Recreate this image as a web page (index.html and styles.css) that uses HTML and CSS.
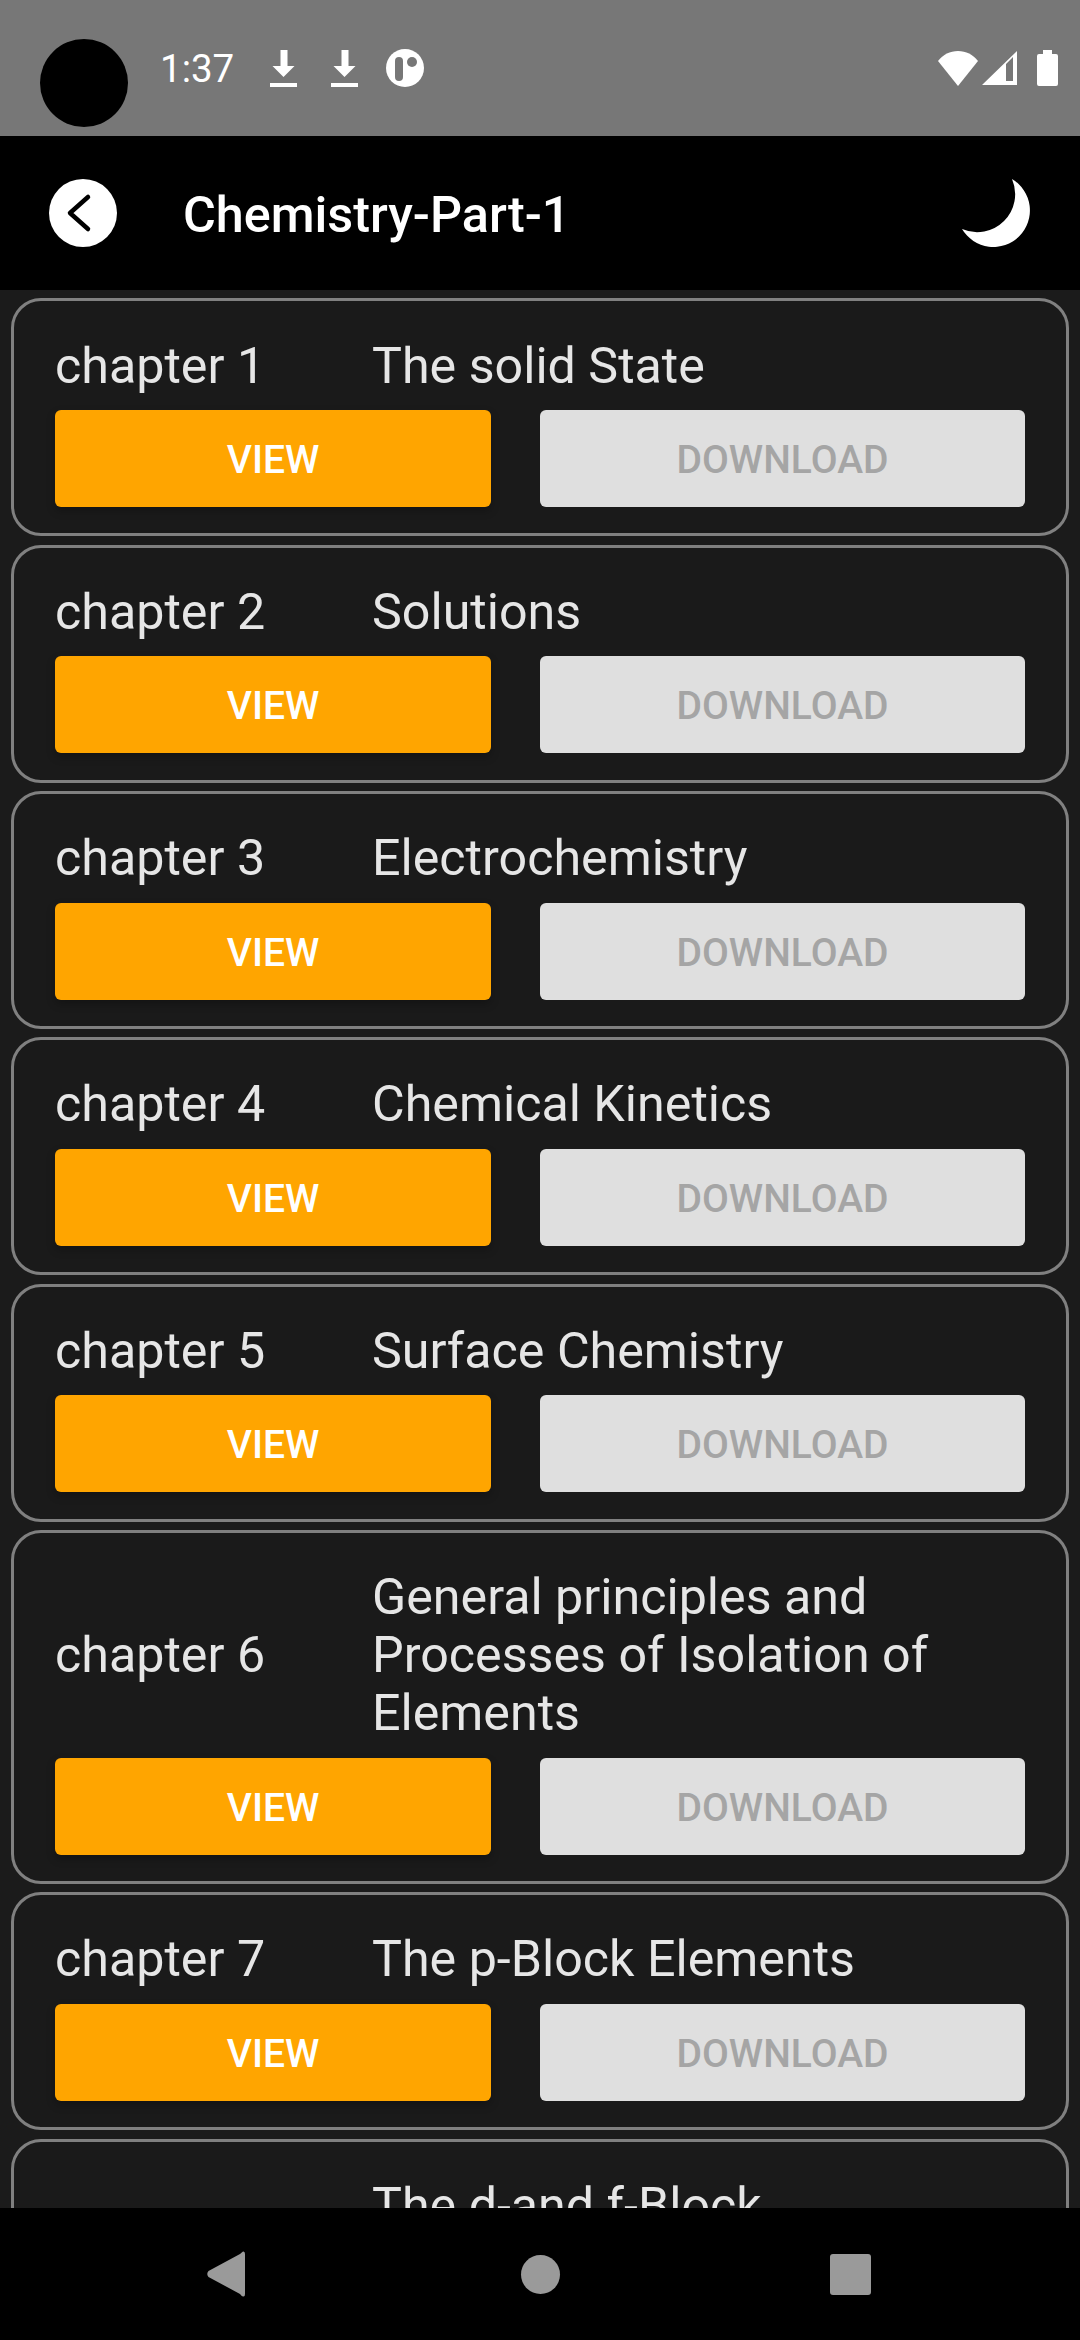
FILE: index.html
```html
<!DOCTYPE html>
<html lang="en">
<head>
    <meta charset="UTF-8">
    <meta name="viewport" content="width=device-width, initial-scale=1.0">
    <title>Chemistry-Part-1</title>
    <link rel="stylesheet" href="styles.css">
</head>
<body>

<div class="phone">
    <div class="status-bar">
        <div class="camera"></div>
        <span class="time">1:37</span>
        <svg class="ic-download" viewBox="0 0 27 37"><path d="M10.500 0h7v16h7L13.500 27 2.500 16h8z M0 33h27v4H0z" fill="#fff"/></svg>
        <svg class="ic-download" viewBox="0 0 27 37"><path d="M10.500 0h7v16h7L13.500 27 2.500 16h8z M0 33h27v4H0z" fill="#fff"/></svg>
        <svg class="ic-app" viewBox="0 0 38 38">
            <circle cx="19" cy="19" r="19" fill="#fff"/>
            <rect x="9" y="8" width="8" height="24" rx="4" fill="#777"/>
            <circle cx="26" cy="13" r="5" fill="#777"/>
        </svg>
        <div class="status-right">
            <svg class="ic-wifi" viewBox="0 0 40 35"><path d="M0 10C5 3.500 12 0 20 0s15 3.500 20 10L20 35z" fill="#fff"/></svg>
            <svg class="ic-signal" viewBox="0 0 35 34"><path fill-rule="evenodd" d="M0 34 35 0v34z M24 13V30H31V6z" fill="#fff"/></svg>
            <svg class="ic-battery" viewBox="0 0 21 36"><path d="M6 0h9v4h4a2 2 0 0 1 2 2v28a2 2 0 0 1-2 2H2a2 2 0 0 1-2-2V6a2 2 0 0 1 2-2h4z" fill="#fff"/></svg>
        </div>
    </div>

    <div class="header">
        <button class="back-btn">
            <svg viewBox="0 0 68 68"><path d="M39 18 21 34l18 16" fill="none" stroke="#000" stroke-width="4.500" stroke-linecap="round" stroke-linejoin="round"/></svg>
        </button>
        <h1>Chemistry-Part-1</h1>
        <svg class="moon" viewBox="0 0 68 68"><path d="M50 0A36.500 36.500 0 1 1 0 50A38 38 0 0 0 50 0z" fill="#fff"/></svg>
    </div>

    <div class="list">
        <div class="card">
            <div class="card-row">
                <span class="chapter">chapter 1</span>
                <span class="name">The solid State</span>
            </div>
            <div class="card-btns">
                <button class="btn btn-view">View</button>
                <button class="btn btn-download">Download</button>
            </div>
        </div>
        <div class="card">
            <div class="card-row">
                <span class="chapter">chapter 2</span>
                <span class="name">Solutions</span>
            </div>
            <div class="card-btns">
                <button class="btn btn-view">View</button>
                <button class="btn btn-download">Download</button>
            </div>
        </div>
        <div class="card">
            <div class="card-row">
                <span class="chapter">chapter 3</span>
                <span class="name">Electrochemistry</span>
            </div>
            <div class="card-btns">
                <button class="btn btn-view">View</button>
                <button class="btn btn-download">Download</button>
            </div>
        </div>
        <div class="card">
            <div class="card-row">
                <span class="chapter">chapter 4</span>
                <span class="name">Chemical Kinetics</span>
            </div>
            <div class="card-btns">
                <button class="btn btn-view">View</button>
                <button class="btn btn-download">Download</button>
            </div>
        </div>
        <div class="card">
            <div class="card-row">
                <span class="chapter">chapter 5</span>
                <span class="name">Surface Chemistry</span>
            </div>
            <div class="card-btns">
                <button class="btn btn-view">View</button>
                <button class="btn btn-download">Download</button>
            </div>
        </div>
        <div class="card">
            <div class="card-row">
                <span class="chapter">chapter 6</span>
                <span class="name">General principles and Processes of Isolation of Elements</span>
            </div>
            <div class="card-btns">
                <button class="btn btn-view">View</button>
                <button class="btn btn-download">Download</button>
            </div>
        </div>
        <div class="card">
            <div class="card-row">
                <span class="chapter">chapter 7</span>
                <span class="name">The p-Block Elements</span>
            </div>
            <div class="card-btns">
                <button class="btn btn-view">View</button>
                <button class="btn btn-download">Download</button>
            </div>
        </div>
        <div class="card">
            <div class="card-row">
                <span class="chapter">chapter 8</span>
                <span class="name">The d-and f-Block Elements</span>
            </div>
            <div class="card-btns">
                <button class="btn btn-view">View</button>
                <button class="btn btn-download">Download</button>
            </div>
        </div>
    </div>

    <div class="nav-bar">
        <svg class="nav-back" viewBox="0 0 38 46"><path d="M36 0.500Q38 0 38 3v40q0 3-2 2.500Q35 45.500 33 43L1.500 26Q-1 23 1.500 20L33 3Q35 1 36 0.500z" fill="#9a9a9a"/></svg>
        <div class="nav-home"></div>
        <div class="nav-recent"></div>
    </div>
</div>

</body>
</html>
```

FILE: styles.css
```css
* {
    box-sizing: border-box;
}
body {
    margin: 0;
    font-family: Roboto, sans-serif;
    background-color: #000;
}
.phone {
    width: 1080px;
    height: 2340px;
    display: flex;
    flex-direction: column;
    overflow: hidden;
}
.status-bar {
    position: relative;
    height: 136px;
    flex-shrink: 0;
    background-color: #777;
    display: flex;
    align-items: center;
    padding: 0 22px 0 160px;
    color: #fff;
}
.camera {
    position: absolute;
    left: 40px;
    top: 39px;
    width: 88px;
    height: 88px;
    border-radius: 50%;
    background-color: #000;
}
.time {
    font-size: 38.5px;
    width: 110px;
}
.ic-download {
    width: 27px;
    height: 37px;
    margin-right: 34px;
}
.ic-app {
    width: 38px;
    height: 38px;
    margin-left: -6px;
}
.status-right {
    margin-left: auto;
    display: flex;
    align-items: center;
}
.ic-wifi {
    width: 40px;
    height: 35px;
}
.ic-signal {
    width: 35px;
    height: 34px;
    margin-left: 4px;
}
.ic-battery {
    width: 21px;
    height: 36px;
    margin-left: 20px;
}
.header {
    height: 154px;
    flex-shrink: 0;
    background-color: #000;
    display: flex;
    align-items: center;
    padding: 0 50px 0 49px;
}
.back-btn {
    width: 68px;
    height: 68px;
    padding: 0;
    border: none;
    border-radius: 50%;
    background-color: #fff;
}
.back-btn svg {
    display: block;
    width: 68px;
    height: 68px;
}
.header h1 {
    margin: 3px 0 0 66px;
    font-size: 50.3px;
    font-weight: 500;
    color: #fff;
}
.moon {
    width: 68px;
    height: 68px;
    margin-left: auto;
}
.list {
    flex: 1;
    min-height: 0;
    overflow: hidden;
    background-color: #1b1b1b;
    padding: 8.25px 11px 0;
}
.card {
    border: 3px solid #808080;
    border-radius: 30px;
    background-color: #1a1a1a;
    padding: 35.25px 41px 26.33px;
    margin-bottom: 8.25px;
}
.card-row {
    display: grid;
    grid-template-columns: 317px 1fr;
    align-items: center;
    font-size: 50.2px;
    line-height: 58px;
    color: #e6e6e6;
}
.name {
    padding-right: 70px;
}
.card-btns {
    display: grid;
    grid-template-columns: 436px 485px;
    justify-content: space-between;
    margin-top: 15.5px;
}
.btn {
    height: 97px;
    padding: 3px 0 0;
    border: none;
    border-radius: 6px;
    font-family: Roboto, sans-serif;
    font-size: 39px;
    font-weight: 500;
    text-transform: uppercase;
}
.btn-view {
    background-color: #ffa500;
    color: #fff;
    box-shadow: 0 4px 8px rgba(0, 0, 0, 0.25);
}
.btn-download {
    background-color: #dfdfdf;
    color: #a5a5a5;
}
.nav-bar {
    position: relative;
    height: 132px;
    flex-shrink: 0;
    background-color: #000;
    display: flex;
    align-items: center;
    padding-left: 207px;
}
.nav-back {
    width: 38px;
    height: 46px;
}
.nav-home {
    width: 39px;
    height: 39px;
    margin-left: 276px;
    border-radius: 50%;
    background-color: #9a9a9a;
}
.nav-recent {
    width: 41px;
    height: 41px;
    margin-left: 270px;
    border-radius: 3px;
    background-color: #9a9a9a;
}
```
